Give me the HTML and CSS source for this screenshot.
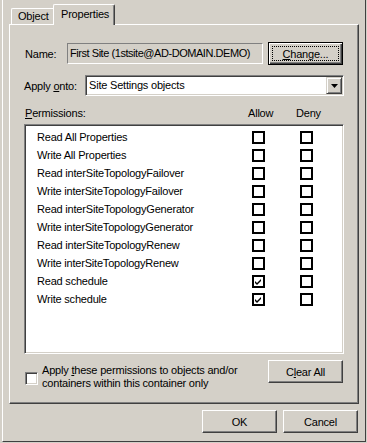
FILE: index.html
```html
<!DOCTYPE html>
<html lang="en">
<head>
    <meta charset="UTF-8">
    <title>Site Settings Permissions</title>
    <link rel="stylesheet" href="styles.css">
</head>
<body>

    <div class="dialog">

        <div class="tabs">
            <div class="tab">Object</div>
            <div class="tab active">Properties</div>
        </div>

        <div class="panel">

            <div class="name-row">
                <span class="name-label">Name:</span>
                <div class="field">First Site (1stsite@AD-DOMAIN.DEMO)</div>
                <button class="btn default"><span class="focus"><u>C</u>hange...</span></button>
            </div>

            <div class="apply-row">
                <span>Apply <u>o</u>nto:</span>
                <div class="combo">
                    <span class="combo-text">Site Settings objects</span>
                    <span class="drop">
                        <svg width="7" height="4" viewBox="0 0 7 4"><path d="M0 0h7L3.5 4z" fill="#000"/></svg>
                    </span>
                </div>
            </div>

            <div class="perm-head">
                <span><u>P</u>ermissions:</span>
                <span>Allow</span>
                <span>Deny</span>
            </div>

            <div class="list">
                <div class="perm"><span>Read All Properties</span><i class="box"></i><i></i><i class="box"></i></div>
                <div class="perm"><span>Write All Properties</span><i class="box"></i><i></i><i class="box"></i></div>
                <div class="perm"><span>Read interSiteTopologyFailover</span><i class="box"></i><i></i><i class="box"></i></div>
                <div class="perm"><span>Write interSiteTopologyFailover</span><i class="box"></i><i></i><i class="box"></i></div>
                <div class="perm"><span>Read interSiteTopologyGenerator</span><i class="box"></i><i></i><i class="box"></i></div>
                <div class="perm"><span>Write interSiteTopologyGenerator</span><i class="box"></i><i></i><i class="box"></i></div>
                <div class="perm"><span>Read interSiteTopologyRenew</span><i class="box"></i><i></i><i class="box"></i></div>
                <div class="perm"><span>Write interSiteTopologyRenew</span><i class="box"></i><i></i><i class="box"></i></div>
                <div class="perm"><span>Read schedule</span><i class="box checked"><svg width="9" height="9" viewBox="0 0 9 9"><path d="M1 4l2 2 4-4v2l-4 4-2-2z" fill="#000"/></svg></i><i></i><i class="box"></i></div>
                <div class="perm"><span>Write schedule</span><i class="box checked"><svg width="9" height="9" viewBox="0 0 9 9"><path d="M1 4l2 2 4-4v2l-4 4-2-2z" fill="#000"/></svg></i><i></i><i class="box"></i></div>
            </div>

            <div class="bottom-row">
                <i class="check3d"></i>
                <div class="apply-text">Apply <u>t</u>hese permissions to objects and/or<br>containers within this container only</div>
                <button class="btn clear">C<u>l</u>ear All</button>
            </div>

        </div>

        <div class="footer">
            <button class="btn">OK</button>
            <button class="btn">Cancel</button>
        </div>

    </div>

</body>
</html>
```

FILE: styles.css
```css
body{
    margin: 0;
    background: #d4d0c8;
    font-family: "Liberation Sans", Arial, sans-serif;
    font-size: 11px;
    letter-spacing: -0.2px;
    color: #000;
}

u{
    text-decoration: underline;
}

.dialog{
    box-sizing: border-box;
    margin-left: 2px;
    width: 364px;
    height: 442px;
    border-left: 1px solid #fff;
    border-right: 1px solid #404040;
    border-bottom: 1px solid #404040;
}

/* tabs */
.tabs{
    display: flex;
    align-items: flex-end;
    height: 20px;
    padding: 4px 0 0 8px;
}

.tab{
    box-sizing: border-box;
    width: 42px;
    height: 16px;
    padding-left: 6px;
    line-height: 14px;
    border-top: 1px solid #fff;
    border-left: 1px solid #fff;
    border-top-left-radius: 2px;
}

.tab.active{
    position: relative;
    z-index: 1;
    width: 62px;
    height: 21px;
    margin-bottom: -1px;
    padding: 3px 0 0 7px;
    line-height: 13px;
    background: #d4d0c8;
    border-right: 1px solid #404040;
    border-top-right-radius: 2px;
    box-shadow: inset -1px 0 #808080;
}

.panel{
    box-sizing: border-box;
    margin-left: 6px;
    width: 350px;
    height: 380px;
    padding: 17px 14px 0 14px;
    border: 1px solid #fff;
    border-right-color: #404040;
    border-bottom-color: #404040;
    box-shadow: inset -1px -1px #808080;
}

/* buttons */
.btn{
    box-sizing: border-box;
    width: 75px;
    height: 23px;
    padding: 0;
    background: #d4d0c8;
    font: inherit;
    letter-spacing: inherit;
    color: #000;
    border: 1px solid;
    border-color: #fff #404040 #404040 #fff;
    box-shadow: inset -1px -1px #808080;
}

.btn.default{
    display: flex;
    padding: 3px;
    border-color: #000;
    box-shadow: inset 1px 1px #fff, inset -1px -1px #404040, inset -2px -2px #808080;
}

.focus{
    flex: 1;
    display: flex;
    align-items: center;
    justify-content: center;
    border: 1px dotted #000;
}

/* name */
.name-row{
    display: flex;
    align-items: center;
    height: 23px;
}

.name-label{
    width: 42px;
    margin-left: 1px;
}

.field{
    box-sizing: border-box;
    width: 196px;
    height: 21px;
    margin-right: 5px;
    padding-left: 2px;
    line-height: 19px;
    letter-spacing: -0.45px;
    white-space: nowrap;
    overflow: hidden;
    border: 1px solid;
    border-color: #808080 #fff #fff #808080;
}

/* apply onto */
.apply-row{
    display: flex;
    align-items: center;
    justify-content: space-between;
    margin-top: 10px;
    height: 21px;
}

.combo{
    box-sizing: border-box;
    display: flex;
    width: 259px;
    height: 21px;
    padding: 1px;
    background: #fff;
    border: 1px solid;
    border-color: #808080 #fff #fff #808080;
    box-shadow: inset 1px 1px #404040, inset -1px -1px #d4d0c8;
}

.combo-text{
    flex: 1;
    padding-left: 2px;
    line-height: 17px;
}

.drop{
    box-sizing: border-box;
    display: flex;
    align-items: center;
    justify-content: center;
    width: 16px;
    height: 17px;
    background: #d4d0c8;
    border: 1px solid;
    border-color: #d4d0c8 #404040 #404040 #d4d0c8;
    box-shadow: inset 1px 1px #fff, inset -1px -1px #808080;
}

/* permissions */
.perm-head{
    display: grid;
    grid-template-columns: 223px 48px auto;
    margin: 11px 0 0 1px;
    line-height: 13px;
}

.list{
    box-sizing: border-box;
    height: 230px;
    margin-top: 4px;
    padding: 3px 0 0 12px;
    background: #fff;
    border: 1px solid;
    border-color: #808080 #fff #fff #808080;
    box-shadow: inset 1px 1px #404040, inset -1px -1px #d4d0c8;
}

.perm{
    display: grid;
    grid-template-columns: 215px 13px 35px 13px;
    align-items: center;
    height: 18px;
}

.box{
    box-sizing: border-box;
    display: flex;
    align-items: center;
    justify-content: center;
    width: 13px;
    height: 13px;
    border: 2px solid #000;
    background: #fff;
}

/* bottom */
.bottom-row{
    display: flex;
    align-items: flex-start;
    margin-top: 6px;
}

.check3d{
    box-sizing: border-box;
    width: 13px;
    height: 13px;
    margin: 12px 4px 0 1px;
    background: #fff;
    border: 1px solid;
    border-color: #808080 #fff #fff #808080;
    box-shadow: inset 1px 1px #404040, inset -1px -1px #d4d0c8;
}

.apply-text{
    flex: 1;
    margin-top: 4px;
    line-height: 13px;
}

.btn.clear{
    margin-right: 1px;
}

.footer{
    display: flex;
    justify-content: flex-end;
    gap: 6px;
    margin-top: 6px;
    padding-right: 7px;
}
```
